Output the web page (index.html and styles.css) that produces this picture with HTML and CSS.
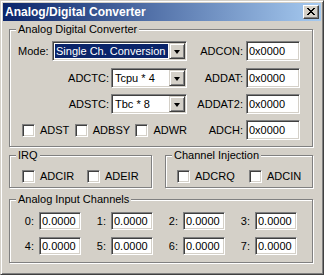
FILE: index.html
```html
<!DOCTYPE html>
<html>
<head>
<meta charset="utf-8">
<link rel="stylesheet" href="styles.css">
</head>
<body>
<div class="window">
  <div class="titlebar">
    <span class="title">Analog/Digital Converter</span>
    <div class="close">
      <svg width="8" height="7" viewBox="0 0 8 7" shape-rendering="crispEdges"><path d="M0 0h2v1H0zM6 0h2v1H6zM1 1h2v1H1zM5 1h2v1H5zM2 2h4v1H2zM3 3h2v1H3zM2 4h4v1H2zM1 5h2v1H1zM5 5h2v1H5zM0 6h2v1H0zM6 6h2v1H6z" fill="#000"/></svg>
    </div>
  </div>
  <div class="client">
    <fieldset class="group g-adc">
      <legend>Analog Digital Converter</legend>
      <div class="row">
        <div class="left">
          <span class="mode-lbl">Mode:</span>
          <div class="select sel-mode"><span class="val active">Single Ch. Conversion</span><span class="drop"><i class="arrow"></i></span></div>
        </div>
        <div class="right"><span class="rlbl">ADCON:</span><div class="edit">0x0000</div></div>
      </div>
      <div class="row first-gap">
        <div class="left">
          <span class="llbl">ADCTC:</span>
          <div class="select sel-small"><span class="val">Tcpu * 4</span><span class="drop"><i class="arrow"></i></span></div>
        </div>
        <div class="right"><span class="rlbl">ADDAT:</span><div class="edit">0x0000</div></div>
      </div>
      <div class="row">
        <div class="left">
          <span class="llbl">ADSTC:</span>
          <div class="select sel-small"><span class="val">Tbc * 8</span><span class="drop"><i class="arrow"></i></span></div>
        </div>
        <div class="right"><span class="rlbl">ADDAT2:</span><div class="edit">0x0000</div></div>
      </div>
      <div class="row">
        <div class="left checks">
          <label class="chk w54"><span class="cb"></span>ADST</label>
          <label class="chk w62"><span class="cb"></span>ADBSY</label>
          <label class="chk"><span class="cb"></span>ADWR</label>
        </div>
        <div class="right"><span class="rlbl">ADCH:</span><div class="edit">0x0000</div></div>
      </div>
    </fieldset>
    <div class="pair">
      <fieldset class="group g-irq">
        <legend>IRQ</legend>
        <div class="crow irq-row">
          <label class="chk w65"><span class="cb"></span>ADCIR</label>
          <label class="chk"><span class="cb"></span>ADEIR</label>
        </div>
      </fieldset>
      <fieldset class="group g-inj">
        <legend>Channel Injection</legend>
        <div class="crow inj-row">
          <label class="chk w72"><span class="cb"></span>ADCRQ</label>
          <label class="chk"><span class="cb"></span>ADCIN</label>
        </div>
      </fieldset>
    </div>
    <fieldset class="group g-ain">
      <legend>Analog Input Channels</legend>
      <div class="grid">
        <div class="cell"><span class="clbl">0:</span><div class="edit small">0.0000</div></div>
        <div class="cell"><span class="clbl">1:</span><div class="edit small">0.0000</div></div>
        <div class="cell"><span class="clbl">2:</span><div class="edit small">0.0000</div></div>
        <div class="cell"><span class="clbl">3:</span><div class="edit small">0.0000</div></div>
        <div class="cell"><span class="clbl">4:</span><div class="edit small">0.0000</div></div>
        <div class="cell"><span class="clbl">5:</span><div class="edit small">0.0000</div></div>
        <div class="cell"><span class="clbl">6:</span><div class="edit small">0.0000</div></div>
        <div class="cell"><span class="clbl">7:</span><div class="edit small">0.0000</div></div>
      </div>
    </fieldset>
  </div>
</div>
</body>
</html>
```
FILE: styles.css
```css
html, body {
  margin: 0;
  padding: 0;
  background: #D4D0C8;
}
body {
  font-family: "Liberation Sans", Arial, sans-serif;
  font-size: 11px;
  line-height: 13px;
  color: #000;
}
.window {
  width: 324px;
  height: 275px;
  box-sizing: border-box;
  background: #D4D0C8;
  border: 1px solid;
  border-color: #D4D0C8 #404040 #404040 #D4D0C8;
  box-shadow: inset 1px 1px #fff, inset -1px -1px #808080;
  padding: 2px;
  display: flex;
  flex-direction: column;
}
.titlebar {
  height: 18px;
  flex: none;
  background: linear-gradient(to right, #0A246A, #A6CAF0);
  display: flex;
  align-items: center;
  justify-content: space-between;
  padding: 0 2px 0 2px;
}
.title {
  color: #fff;
  font-weight: bold;
  font-size: 12px;
  line-height: 14px;
}
.close {
  width: 16px;
  height: 14px;
  box-sizing: border-box;
  background: #D4D0C8;
  border: 1px solid;
  border-color: #fff #404040 #404040 #fff;
  box-shadow: inset -1px -1px #808080;
  display: flex;
  align-items: center;
  justify-content: center;
  padding: 0 1px 1px 0;
}
.close svg { display: block; }
.client {
  padding: 2px 8px 0 6px;
}
.group {
  margin: 0;
  border: 1px solid #808080;
  box-shadow: inset 1px 1px #fff, 1px 1px #fff;
  padding: 5px 8px 6px 8px;
  min-width: 0;
}
.group legend {
  padding: 0 2px;
  margin-left: -2px;
  background: #D4D0C8;
  line-height: 13px;
}
.row {
  display: flex;
  align-items: center;
  height: 20px;
}
.row + .row { margin-top: 6px; }
.row.first-gap { margin-top: 7px; }
.left {
  width: 169px;
  display: flex;
  align-items: center;
}
.mode-lbl { width: 34px; }
.llbl {
  flex: 1;
  text-align: right;
  padding-right: 2px;
}
.right {
  display: flex;
  align-items: center;
}
.rlbl {
  width: 59px;
  text-align: right;
  padding-right: 3px;
  box-sizing: border-box;
}
.select, .edit {
  box-sizing: border-box;
  background: #fff;
  border: 1px solid;
  border-color: #808080 #fff #fff #808080;
  box-shadow: inset 1px 1px #404040, inset -1px -1px #D4D0C8;
  height: 20px;
}
.select {
  display: flex;
  align-items: stretch;
  padding: 1px;
}
.sel-mode { width: 135px; }
.sel-small { width: 76px; }
.val {
  flex: 1;
  margin: 1px;
  padding-left: 1px;
  display: flex;
  align-items: center;
  white-space: nowrap;
  overflow: hidden;
}
.val.active {
  background: #0A246A;
  color: #fff;
}
.drop {
  width: 16px;
  box-sizing: border-box;
  background: #D4D0C8;
  border: 1px solid;
  border-color: #D4D0C8 #404040 #404040 #D4D0C8;
  box-shadow: inset 1px 1px #fff, inset -1px -1px #808080;
  display: flex;
  align-items: center;
  justify-content: center;
}
.arrow {
  width: 0;
  height: 0;
  border-left: 3.5px solid transparent;
  border-right: 3.5px solid transparent;
  border-top: 4px solid #000;
  margin-top: 1px;
}
.edit {
  width: 54px;
  padding: 0 0 0 2px;
  display: flex;
  align-items: center;
}
.edit.small {
  width: 42px;
  height: 18px;
}
.checks { padding-left: 4px; box-sizing: border-box; }
.chk {
  display: flex;
  align-items: center;
  gap: 5px;
}
.w54 { width: 54px; }
.w62 { width: 62px; }
.w65 { width: 65px; }
.w72 { width: 72px; }
.cb {
  width: 13px;
  height: 13px;
  box-sizing: border-box;
  background: #fff;
  border: 1px solid;
  border-color: #808080 #fff #fff #808080;
  box-shadow: inset 1px 1px #404040, inset -1px -1px #D4D0C8;
  flex: none;
}
.pair {
  display: flex;
  gap: 13px;
  margin-top: 2px;
}
.g-irq { width: 143px; box-sizing: border-box; padding: 8px 8px 4px 8px; }
.g-inj { width: 148px; box-sizing: border-box; padding: 8px 8px 4px 8px; }
.crow {
  display: flex;
  align-items: center;
  height: 13px;
}
.irq-row { padding-left: 4px; }
.inj-row { padding-left: 3px; }
.g-ain {
  margin-top: 5px;
  padding: 6px 8px 7px 8px;
}
.grid {
  display: grid;
  grid-template-columns: repeat(4, 72px);
  row-gap: 7px;
}
.cell {
  display: flex;
  align-items: center;
}
.clbl {
  width: 21px;
  text-align: right;
  padding-right: 5px;
  box-sizing: border-box;
}
```
